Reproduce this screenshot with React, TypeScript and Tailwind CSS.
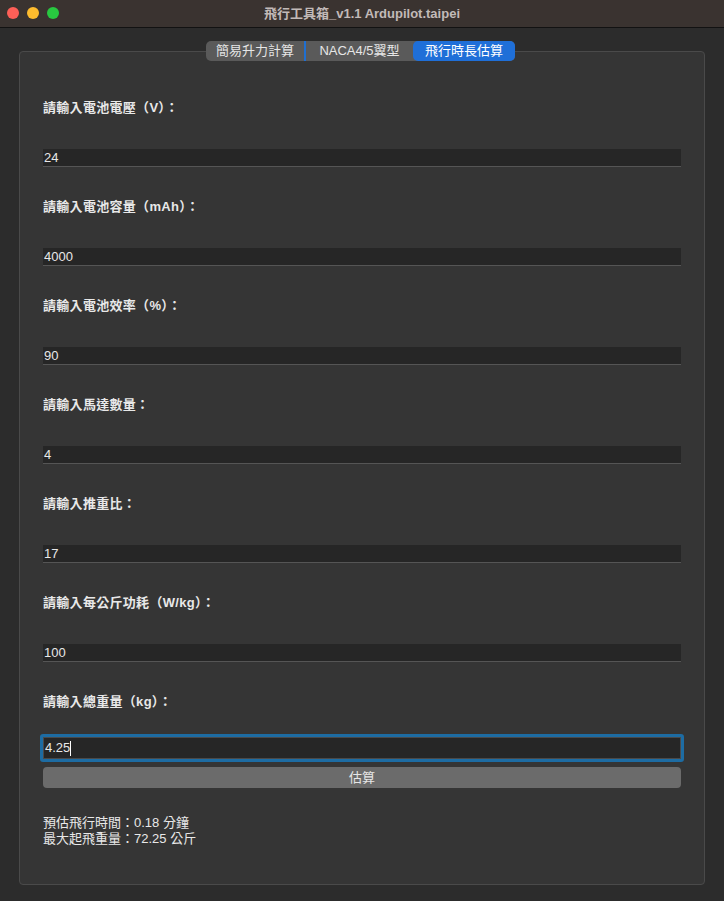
import React from "react";

const FONT = { fontFamily: '"Liberation Sans", "Noto Sans CJK TC", sans-serif' };

const fields = [
  { label: "請輸入電池電壓（V）：", value: "24" },
  { label: "請輸入電池容量（mAh）：", value: "4000" },
  { label: "請輸入電池效率（%）：", value: "90" },
  { label: "請輸入馬達數量：", value: "4" },
  { label: "請輸入推重比：", value: "17" },
  { label: "請輸入每公斤功耗（W/kg）：", value: "100" },
];

export default function App() {
  return (
    <div className="w-[724px] h-[901px] bg-[#2c2c2c] flex flex-col overflow-hidden text-[#e8e8e8]" style={FONT}>
      {/* Title bar */}
      <div className="relative h-[28px] shrink-0 bg-[#3a3330] border-b border-[#121212] flex items-center justify-center">
        <div className="absolute left-[7px] top-[7px] flex gap-[8px]">
          <span className="w-[12px] h-[12px] rounded-full bg-[#fe5f57]"></span>
          <span className="w-[12px] h-[12px] rounded-full bg-[#febc2e]"></span>
          <span className="w-[12px] h-[12px] rounded-full bg-[#28c840]"></span>
        </div>
        <span className="text-[13px] font-bold text-[#c2bab8]">飛行工具箱_v1.1 Ardupilot.taipei</span>
      </div>

      {/* Body */}
      <div className="relative flex-1 px-[19px] pt-[23px] pb-[16px]">
        {/* Tabs */}
        <div className="absolute left-[206px] top-[13px] z-10 flex h-[20px] rounded-[5px] bg-[#5a5a5a] text-[13px] leading-[20px]">
          <div className="w-[100px] text-center text-[#e6e6e6] border-r-2 border-[#1f6fd1]">簡易升力計算</div>
          <div className="w-[107px] text-center text-[#e6e6e6]">NACA4/5翼型</div>
          <div className="w-[102px] text-center text-white bg-[#1f6fd8] rounded-[5px]">飛行時長估算</div>
        </div>

        <div className="h-full rounded-[4px] border border-[#4a4a4a] bg-[#353535] px-[23px] pt-[49px]">
          {fields.map((f) => (
            <div key={f.label} className="h-[99px] flex flex-col">
              <div className="h-[14px] text-[13px] leading-[14px] font-bold mb-[34px] tracking-[0.3px]">{f.label}</div>
              <div className="w-[638px] h-[18px] bg-[#262626] border-b border-[#555] text-[13px] leading-[17px] px-[1px]">{f.value}</div>
            </div>
          ))}
          <div className="h-[14px] text-[13px] leading-[14px] font-bold tracking-[0.3px]">請輸入總重量（kg）：</div>
          <div className="mt-[25px] -ml-[3px] w-[644px] h-[28px] rounded-[3px] border-[3px] border-[#1d6ca3] bg-[#262626]">
            <div className="h-full border border-[#4a4a4a] text-[13px] leading-[20px] pl-[1px] flex items-center">
              <span>4.25</span>
              <span className="w-[1px] h-[15px] bg-white"></span>
            </div>
          </div>
          <div className="mt-[5px] w-[638px] h-[21px] rounded-[4px] bg-[#6b6b6b] text-center text-[13px] leading-[21px] text-[#e6e6e6]">估算</div>
          <div className="mt-[27px] text-[13px] leading-[16px]">
            <div className="h-[16px]">預估飛行時間：0.18 分鐘</div>
            <div className="h-[16px]">最大起飛重量：72.25 公斤</div>
          </div>
        </div>
      </div>
    </div>
  );
}
